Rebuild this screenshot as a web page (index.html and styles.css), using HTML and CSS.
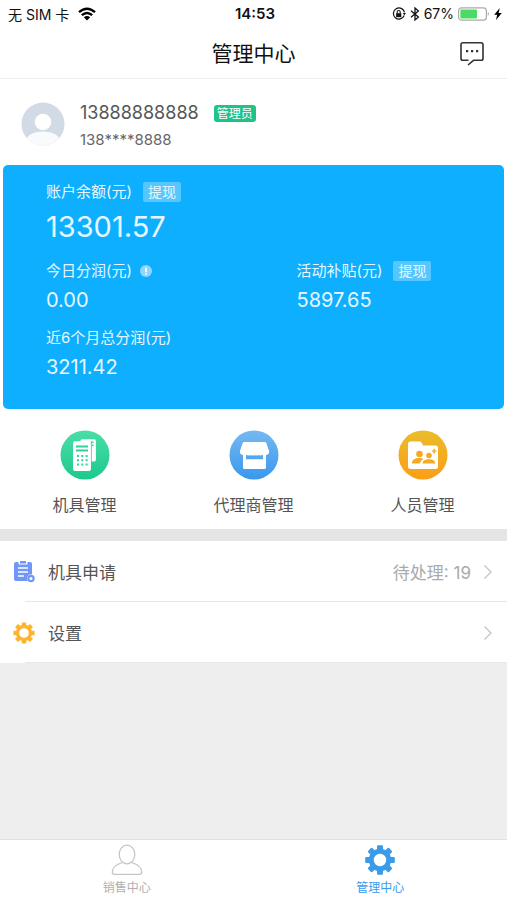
FILE: index.html
```html
<!DOCTYPE html>
<html lang="zh-CN">
<head>
<meta charset="utf-8">
<meta name="viewport" content="width=device-width, initial-scale=1">
<title>管理中心</title>
<link rel="stylesheet" href="styles.css">
</head>
<body>
<div class="status">
  <div class="status-side status-left">
    <span>无 SIM 卡</span>
    <svg width="18" height="14" viewBox="0 0 18 14" fill="none" stroke="#000" stroke-width="2.4"><path d="M1 5.2Q9-1.8 17 5.2M3.8 8.2Q9 3.8 14.2 8.2"/><path d="M5.8 10.2Q9 7.6 12.2 10.2L9 13.4z" fill="#000" stroke="none"/></svg>
  </div>
  <time class="clock">14:53</time>
  <div class="status-side status-right">
    <svg width="14" height="14" viewBox="0 0 14 14" fill="none" stroke="#111"><path d="M12.2 8.6A5.6 5.6 0 1 1 12.5 5.4" stroke-width="1.2"/><path d="M10.7 6h3.2l-1.5 2.3z" fill="#111" stroke="none"/><rect x="4.1" y="6.2" width="5.2" height="4" fill="#111" stroke="none"/><path d="M5.2 6.5V5a1.5 1.5 0 0 1 3 0v1.5" stroke-width="1.1"/></svg>
    <svg width="10" height="14" viewBox="0 0 10 14" fill="none" stroke="#111" stroke-width="1.3"><path d="M1 3.8l7.4 6.3L5 13V1l3.4 2.9L1 10.2"/></svg>
    <span>67%</span>
    <svg width="32" height="14" viewBox="0 0 32 14"><rect x=".6" y=".8" width="27.8" height="12.4" rx="3" fill="#fff" stroke="#aaa" stroke-width="1.2"/><rect x="2.4" y="2.6" width="16.6" height="8.8" rx="1" fill="#4cd964"/><path d="M29.8 4.8q2 2.2 0 4.4z" fill="#aaa"/></svg>
    <svg width="8" height="12" viewBox="0 0 8 12"><path d="M5.8 0L.2 6.8h3L2 12l5.8-7H4.6z" fill="#000"/></svg>
  </div>
</div>
<header class="header">
  <h1>管理中心</h1>
  <button class="message" aria-label="消息">
    <svg width="26" height="26" viewBox="0 0 26 26" fill="none" stroke="#333" stroke-width="1.6"><path d="M9.5 19.3H3.8a1.8 1.8 0 0 1-1.8-1.8V3.6a1.8 1.8 0 0 1 1.8-1.8h18.4A1.8 1.8 0 0 1 24 3.6v13.9a1.8 1.8 0 0 1-1.8 1.8h-7.7L9 24" stroke-linejoin="round"/><path d="M7 10.2h2.2M12 10.2h2.2M17 10.2h2.2" stroke-width="2.2"/></svg>
  </button>
</header>
<main>
  <section class="profile">
    <svg width="44" height="44" viewBox="0 0 44 44"><defs><clipPath id="face"><circle cx="22" cy="22" r="21.5"/></clipPath></defs><g clip-path="url(#face)"><rect width="44" height="44" fill="#d1dae5"/><ellipse cx="22" cy="39" rx="17" ry="9.5" fill="#f8fafc"/><circle cx="22" cy="20" r="8.3" fill="#fff"/></g></svg>
    <div>
      <div class="account"><span>13888888888</span><span class="role">管理员</span></div>
      <div class="phone">138****8888</div>
    </div>
  </section>
  <div class="summary">
  <section class="card">
    <div class="stat stat-main">
      <div class="label">账户余额(元)<button class="withdraw">提现</button></div>
      <div class="value">13301.57</div>
    </div>
    <div class="stat">
      <div class="label">今日分润(元)<button class="info" aria-label="说明"><svg width="12" height="12" viewBox="0 0 12 12"><circle cx="6" cy="6" r="6" fill="#8fd6ff"/><path d="M6 2.4v4.8M6 8.2v1.6" stroke="#fff" stroke-width="1.6"/></svg></button></div>
      <div class="value">0.00</div>
    </div>
    <div class="stat">
      <div class="label">活动补贴(元)<button class="withdraw">提现</button></div>
      <div class="value">5897.65</div>
    </div>
    <div class="stat">
      <div class="label">近6个月总分润(元)</div>
      <div class="value">3211.42</div>
    </div>
  </section>
  </div>
  <nav class="actions">
    <a href="#machines">
      <svg width="50" height="50" viewBox="0 0 50 50"><defs><linearGradient id="green" x2="0" y2="1"><stop stop-color="#4bdda8"/><stop offset="1" stop-color="#1cc98c"/></linearGradient></defs><circle cx="25" cy="25" r="24.5" fill="url(#green)"/><path d="M20.5 10.8q0-1.6 1.6-1.6h12q1.8 0 1.8 1.8v18.8q0 1.8-1.8 1.8h-3.6V14q0-2-2-2h-8z" fill="#fff"/><path d="M30.5 12.3h3M32 15.2h1.5" stroke="#31d29a" stroke-width="1.4"/><rect x="13" y="11.3" width="18" height="29.7" rx="2" fill="#fff"/><path d="M31.400 13v19" stroke="#31d29a" stroke-width=".8"/><path d="M16 16.5h12M16 20.5h12" stroke="#31d29a" stroke-width="2"/><path d="M17 26h11M17 30.3h11M17 34.6h11" stroke="#31d29a" stroke-width="2" stroke-dasharray="2 2.3"/></svg>
      <span>机具管理</span>
    </a>
    <a href="#agents">
      <svg width="50" height="50" viewBox="0 0 50 50"><defs><linearGradient id="blue" x2="0" y2="1"><stop stop-color="#76b8f0"/><stop offset="1" stop-color="#3898ee"/></linearGradient></defs><circle cx="25" cy="25" r="24.5" fill="url(#blue)"/><path d="M15.500 12h20q1.500 0 2 1.400l2.500 7.600H11l2.500-7.600q.5-1.400 2-1.400z" fill="#fff"/><path d="M11 20h29v1.500a2.900 2.900 0 0 1-5.800 1 2.900 2.900 0 0 1-5.800 0 2.900 2.900 0 0 1-5.800 0 2.900 2.900 0 0 1-5.800 0A2.900 2.900 0 0 1 11 21.500z" fill="#fff"/><path fill-rule="evenodd" d="M14 22h23v15.500q0 1.500-1.500 1.500h-20Q14 39 14 37.500zM17 24.500v4.700h17v-4.700q-1.500 1.500-3.200-.5-2.600 3-5.300 0-2.700 3-5.400 0-1.600 2-3.100.5z" fill="#fff"/></svg>
      <span>代理商管理</span>
    </a>
    <a href="#staff">
      <svg width="50" height="50" viewBox="0 0 50 50"><defs><linearGradient id="gold" x2="0" y2="1"><stop stop-color="#e9bd2b"/><stop offset="1" stop-color="#fb9e16"/></linearGradient></defs><circle cx="25" cy="25" r="24.5" fill="url(#gold)"/><path d="M12.500 11.500h9q1.500 0 2.200 1.300l1.500 2.700h12.300q2.500 0 2.500 2.500v18.500q0 2.500-2.500 2.500h-25q-2.500 0-2.500-2.500V14q0-2.500 2.500-2.500z" fill="#fff"/><g fill="#f4ab1f"><circle cx="21.500" cy="24" r="3.300"/><path d="M14 33.500c0-4 3-5.500 7.500-5.500 2 0 3 .4 4.200 1.100-2 1.100-3.300 2.200-3.700 4.400z"/><circle cx="31" cy="25.500" r="2.800"/><path d="M24.500 33.500c.3-3 3-4.300 6.500-4.300s6 1.300 6.300 4.300zM35.500 18.800h1.400v1.600h1.600v1.400h-1.600v1.600h-1.400v-1.600h-1.600v-1.400h1.600z"/></g></svg>
      <span>人员管理</span>
    </a>
  </nav>
  <nav class="list">
    <a href="#apply">
      <svg width="22" height="24" viewBox="0 0 22 24"><path d="M3 2h2.500v2.500h9V2H17q2 0 2 2v10.500a4 4 0 0 0-4 6.500H3q-2 0-2-2V4q0-2 2-2z" fill="#6f96f8"/><path d="M7 1h6v2.500H7z" fill="#6f96f8"/><path d="M5 8h10M5 12h10M5 16h6" stroke="#fff" stroke-width="1.700"/><circle cx="18" cy="18.500" r="3.700" fill="#6f96f8"/><circle cx="18" cy="18.500" r="1.500" fill="#fff"/></svg>
      <span class="name">机具申请</span>
      <span class="pending">待处理: 19</span>
      <svg width="10" height="16" viewBox="0 0 10 16" fill="none" stroke="#c4c4c4" stroke-width="1.300"><path d="M1.500 1.500L8 8l-6.500 6.500"/></svg>
    </a>
    <a href="#settings">
      <svg width="22" height="24" viewBox="-11 -12 22 24"><g fill="#fdb52f"><path id="tooth" d="M-2.200-10q0-.6.600-.6h3.200q.6 0 .6.600V-6h-4.400z"/><use href="#tooth" transform="rotate(45)"/><use href="#tooth" transform="rotate(90)"/><use href="#tooth" transform="rotate(135)"/><use href="#tooth" transform="rotate(180)"/><use href="#tooth" transform="rotate(225)"/><use href="#tooth" transform="rotate(270)"/><use href="#tooth" transform="rotate(315)"/></g><circle r="6.500" fill="none" stroke="#fdb52f" stroke-width="3.400"/></svg>
      <span class="name">设置</span>
      <svg width="10" height="16" viewBox="0 0 10 16" fill="none" stroke="#c4c4c4" stroke-width="1.300"><path d="M1.500 1.500L8 8l-6.500 6.500"/></svg>
    </a>
  </nav>
</main>
<nav class="tabs">
  <a href="#sales">
    <svg width="32" height="32" viewBox="0 0 32 32" fill="none" stroke="#c6c6c6" stroke-width="1.300"><ellipse cx="16" cy="10.500" rx="7.800" ry="9.300"/><path d="M11.500 18.500C5 20.500 1.300 23 1.300 28q0 2.300 2.200 2.300h25q2.200 0 2.200-2.300c0-5-3.700-7.500-10.200-9.500"/></svg>
    <span>销售中心</span>
  </a>
  <a href="#manage" class="current" aria-current="page">
    <svg width="32" height="32" viewBox="-16 -16 32 32"><g fill="#3a9bea"><path id="cogtooth" d="M-3-13.800q0-1 1-1h4q1 0 1 1V-9h-6z"/><use href="#cogtooth" transform="rotate(45)"/><use href="#cogtooth" transform="rotate(90)"/><use href="#cogtooth" transform="rotate(135)"/><use href="#cogtooth" transform="rotate(180)"/><use href="#cogtooth" transform="rotate(225)"/><use href="#cogtooth" transform="rotate(270)"/><use href="#cogtooth" transform="rotate(315)"/></g><circle r="8.700" fill="none" stroke="#3a9bea" stroke-width="5"/></svg>
    <span>管理中心</span>
  </a>
</nav>
</body>
</html>
```
FILE: styles.css
```css
* { box-sizing: border-box; }

body {
  margin: 0;
  min-height: 100vh;
  display: flex;
  flex-direction: column;
  background: #eee;
  color: #555;
  font-family: Inter, "Noto Sans CJK SC", sans-serif;
}

a { color: inherit; text-decoration: none; }
svg { display: block; flex: none; }
button {
  padding: 0;
  border: 0;
  background: none;
  color: inherit;
  font: inherit;
}

.status {
  display: flex;
  align-items: center;
  height: 27px;
  padding: 0 5px 0 8px;
  background: #fff;
  color: #111;
  font-size: 14px;
}
.status-side {
  flex: 1;
  display: flex;
  align-items: center;
}
.status-left { gap: 9px; }
.status-right { justify-content: flex-end; gap: 4px; }
.clock { font-size: 15px; font-weight: 600; }

.header {
  display: grid;
  grid-template-columns: 1fr auto 1fr;
  align-items: center;
  height: 52px;
  padding: 2px 22px 0;
  background: #fff;
  border-bottom: 1px solid #eee;
  color: #111;
}
.header h1 {
  grid-column: 2;
  margin: 0;
  font-size: 21px;
  font-weight: 400;
  line-height: 30px;
}
.message { justify-self: end; }

main { flex: 1; }

.profile {
  display: flex;
  align-items: center;
  gap: 15px;
  height: 86px;
  padding: 4px 21px 0;
  background: #fff;
}
.account {
  display: flex;
  align-items: center;
  gap: 15px;
  padding-top: 4px;
  font-size: 18px;
  line-height: 28px;
}
.role {
  padding: 0 3px;
  border-radius: 3px;
  background: #1fc28b;
  color: #fff;
  font-size: 12px;
  line-height: 17px;
}
.phone { font-size: 15px; line-height: 26px; color: #666; }

.summary {
  padding: 0 3px;
  background: #fff;
}
.card {
  display: grid;
  grid-template-columns: 1fr 1fr;
  row-gap: 9px;
  padding: 15px 0 25px;
  border-radius: 5px;
  background: #0daffe;
  color: #e8f7ff;
}
.stat { padding-left: 43px; }
.stat-main { grid-column: 1 / -1; }
.label {
  display: flex;
  align-items: center;
  height: 24px;
  font-size: 15px;
  line-height: 20px;
}
.value { font-size: 20px; line-height: 34px; }
.stat-main .value { font-size: 29px; line-height: 46px; }
.withdraw {
  margin-left: 11px;
  padding: 0 5px;
  border-radius: 2px;
  background: #56c7fe;
  font-size: 14px;
  line-height: 20px;
}
.info { margin-left: 8px; }

.actions {
  display: grid;
  grid-template-columns: repeat(3, 1fr);
  padding: 21px 0 12px;
  background: #fff;
  font-size: 16px;
}
.actions a {
  display: flex;
  flex-direction: column;
  align-items: center;
  gap: 13px;
  line-height: 24px;
}

.list {
  border-top: 12px solid #e5e5e5;
  background: #fff;
}
.list a {
  display: flex;
  align-items: center;
  height: 61px;
  padding: 0 14px 0 13px;
  font-size: 17px;
  background: linear-gradient(#e8e8e8, #e8e8e8) 25px 100% / 100% 1px no-repeat;
}
.name { flex: 1; margin-left: 13px; }
.pending { margin-right: 12px; color: #aaa; }

.tabs {
  position: sticky;
  bottom: 0;
  display: grid;
  grid-template-columns: 1fr 1fr;
  height: 61px;
  padding-top: 4px;
  border-top: 1px solid #e0e0e0;
  background: #fff;
  color: #b0b0b0;
  font-size: 12px;
}
.tabs a {
  display: flex;
  flex-direction: column;
  align-items: center;
  gap: 3px;
  line-height: 18px;
}
.tabs .current { color: #3a9bea; }
```
